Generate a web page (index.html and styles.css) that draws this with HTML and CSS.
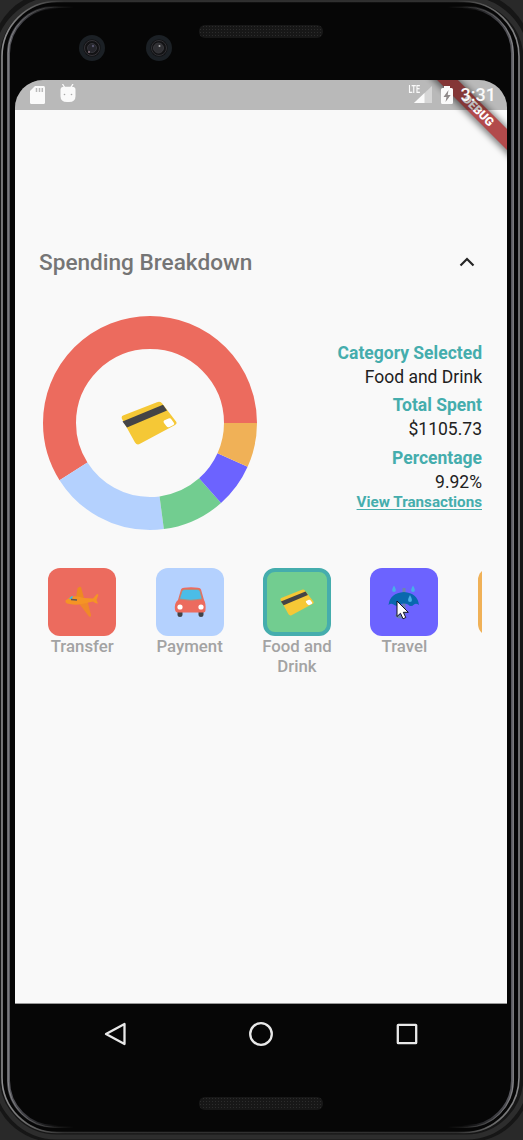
FILE: index.html
```html
<!DOCTYPE html>
<html lang="en">
<head>
<meta charset="utf-8">
<title>Spending Breakdown</title>
<link rel="stylesheet" href="styles.css">
</head>
<body>
<svg width="0" height="0" class="defs" aria-hidden="true">
  <defs>
    <symbol id="card" viewBox="0 0 56 44">
      <path d="M2 14.5 36 1.2Q39 0 41 2.2L55 20.5Q56.500 22.500 54 24L19 42.800Q16 44.500 14 41.500L1 18Q0 15.500 2 14.500Z" fill="#f5c836"/>
      <path d="M1.500 20.500 42 3.800 46 9.500 6 26.500Z" fill="#444446"/>
      <path d="M43 19.500 47.500 17.500Q49.500 16.800 50.500 18.500L53 22Q54 23.500 52 24.300L48.500 26Q46.500 26.800 45.300 25L43 22Q42 20.500 43 19.500Z" fill="#fff"/>
    </symbol>
  </defs>
</svg>
<div class="phone">
  <svg class="frame" viewBox="0 0 523 1140" aria-hidden="true">
    <defs>
      <linearGradient id="rim" x1="0" x2="1" y1="0" y2="0">
        <stop offset="0" stop-color="#8e8e90"/><stop offset=".03" stop-color="#777"/><stop offset=".12" stop-color="#303030"/>
        <stop offset=".88" stop-color="#303030"/><stop offset=".97" stop-color="#777"/><stop offset="1" stop-color="#858587"/>
      </linearGradient>
      <linearGradient id="inner" x1="0" x2="1" y1="0" y2="0">
        <stop offset="0" stop-color="#58585e"/><stop offset=".02" stop-color="#48484e"/><stop offset=".1" stop-color="#060606"/>
        <stop offset=".9" stop-color="#060606"/><stop offset=".98" stop-color="#48484e"/><stop offset="1" stop-color="#58585e"/>
      </linearGradient>
      <linearGradient id="glint" x1="0" x2="1" y1="0" y2="0">
        <stop offset="0" stop-color="#8a8a8c"/><stop offset=".03" stop-color="#666"/><stop offset=".13" stop-color="#060606"/>
        <stop offset=".87" stop-color="#060606"/><stop offset=".97" stop-color="#666"/><stop offset="1" stop-color="#8a8a8c"/>
      </linearGradient>
    </defs>
    <rect width="523" height="1140" fill="#292929"/>
    <rect x="-8" y="-8" width="539" height="1150" rx="62" fill="#161616"/>
    <rect x="-3" y="-1" width="529" height="1138" rx="60" fill="none" stroke="#2d2d2d" stroke-width="5"/>
    <rect x="2" y="1.500" width="517" height="1131" rx="55" fill="#060606" stroke="url(#rim)" stroke-width="1.600"/>
    <rect x="8.500" y="7.500" width="504" height="1119" rx="46" fill="#060606" stroke="url(#inner)" stroke-width="3"/>
    <rect x="8.200" y="7.200" width="505" height="1120" rx="46" fill="none" stroke="url(#glint)" stroke-width="1"/>
  </svg>
  <header class="bezel-top">
    <svg class="camera camera-a" viewBox="0 0 26 26"><circle cx="13" cy="13" r="13" fill="#1b2025"/><circle cx="13" cy="13" r="8.700" fill="#121214"/><circle cx="13" cy="13" r="7.500" fill="none" stroke="#353338"/><circle cx="13" cy="13" r="4.500" fill="#25252b" stroke="#34343a"/><circle cx="14" cy="11" r="1.200" fill="#55536a"/><circle cx="10" cy="17" r="1" fill="#8c7783"/></svg>
    <svg class="camera camera-b" viewBox="0 0 26 26"><circle cx="13" cy="13" r="13" fill="#1b2025"/><circle cx="13" cy="13" r="8.700" fill="#121214"/><circle cx="13" cy="13" r="7.500" fill="none" stroke="#303034"/><circle cx="12.500" cy="13" r="5" fill="#303034" stroke="#38383c"/><circle cx="13.500" cy="11" r="1" fill="#aaa"/></svg>
    <div class="speaker"></div>
  </header>
  <main class="screen">
    <svg class="banner" viewBox="0 0 90 90">
      <defs><filter id="soft" x="-20%" y="-20%" width="140%" height="140%"><feGaussianBlur stdDeviation="3"/></filter></defs>
      <path d="M14 -10 104 80" transform="translate(4.500 -1)" stroke="#000" stroke-opacity=".48" stroke-width="19" filter="url(#soft)"/>
      <path d="M15.500 -15 110.500 80" stroke="#b24a4b" stroke-width="14.700"/>
      <text class="banner-text" transform="translate(61.500 30.500) rotate(45)" y="4.200" text-anchor="middle">DEBUG</text>
    </svg>
    <div class="statusbar">
      <svg class="sd" viewBox="0 0 15 18"><path d="M5 0H13.500Q15 0 15 1.500V16.500Q15 18 13.500 18H1.500Q0 18 0 16.500V5Z" fill="#fafafa"/><path d="M6.500 2V6M9.500 2V6M12.300 2V6" stroke="#bababa" stroke-width="1.500"/></svg>
      <svg class="bot" viewBox="0 0 16 18"><path d="M2.500 0 5 4M13 0 10.500 4" stroke="#fafafa" stroke-width="1.300"/><path d="M.5 6Q.5 2.800 4 2.800H12Q15.500 2.800 15.500 6V12Q15.500 18 9 18H7Q.5 18 .5 12Z" fill="#fafafa"/><circle cx="4.500" cy="10.500" r=".8" fill="#aaa"/><circle cx="11.500" cy="10.500" r=".8" fill="#aaa"/></svg>
      <span class="lte">LTE</span>
      <svg class="signal" viewBox="0 0 18 18"><path d="M18 0V17H0Z" fill="#d6d6d6"/><path d="M10.500 7V17H0Z" fill="#fafafa"/></svg>
      <svg class="battery" viewBox="0 0 12 18"><path d="M3 0H9V2H10.500Q12 2 12 3.500V16.500Q12 18 10.500 18H1.500Q0 18 0 16.500V3.500Q0 2 1.500 2H3Z" fill="#fafafa"/><path d="M7.500 4 2.500 11H5.500L4.500 16 9.700 9H6.700Z" fill="#8f8a8a"/></svg>
      <span class="clock">3:31</span>
    </div>
    <section class="breakdown">
      <div class="heading">
        <h1>Spending Breakdown</h1>
        <svg class="chevron" viewBox="0 0 16 10"><path d="M1.500 8.500 8 2 14.500 8.500" fill="none" stroke="#262626" stroke-width="2.200"/></svg>
      </div>
      <div class="summary">
        <div class="chart">
          <svg class="ring" viewBox="-107 -107 214 214">
            <g fill="none" stroke-width="33">
              <circle r="90.500" pathLength="360" stroke="#ec6b5e" stroke-dasharray="212.300 360" stroke-dashoffset="-147.700"/>
              <circle r="90.500" pathLength="360" stroke="#b4d1fe" stroke-dasharray="65.200 360" stroke-dashoffset="-82.500"/>
              <circle r="90.500" pathLength="360" stroke="#72cd90" stroke-dasharray="34.100 360" stroke-dashoffset="-48.400"/>
              <circle r="90.500" pathLength="360" stroke="#6c63ff" stroke-dasharray="24.200 360" stroke-dashoffset="-24.200"/>
              <circle r="90.500" pathLength="360" stroke="#f0b157" stroke-dasharray="24.200 360"/>
            </g>
          </svg>
          <svg class="chart-icon"><use href="#card"/></svg>
        </div>
        <div class="details">
          <b>Category Selected</b><span>Food and Drink</span>
          <b>Total Spent</b><span>$1105.73</span>
          <b>Percentage</b><span>9.92%</span>
          <a>View Transactions</a>
        </div>
      </div>
      <div class="categories">
        <div class="category">
          <div class="tile transfer">
            <svg width="34" height="32" viewBox="0 0 34 32"><path d="M11 11 12.500 2.500Q14 0 16 1L19 12Z" fill="#ee8a22"/><path d="M12 15 22 13.500 26 29Q26.500 31.500 24 30.500Z" fill="#f0892a"/><path d="M.5 14.500 6 10.500Q12 9.500 19 12L28 12.500 32 8Q34 8 33 10L31.500 14 33 17.500Q31 18 28 15.500L17 18Q9 19.500 2 17.500Q0 16.500.5 14.500Z" fill="#f59425"/><path d="M4 13 6 10.500 8 10 7 13Z" fill="#46b7df"/><path d="M6 13.500 12 14" stroke="#605554" stroke-width="1.600"/></svg>
          </div><span>Transfer</span>
        </div>
        <div class="category">
          <div class="tile payment">
            <svg width="32" height="31" viewBox="0 0 32 31"><path d="M3.500 25H8.500V28Q8.500 30 6 30Q3.500 30 3.500 28ZM24.500 25H29.500V28Q29.500 30 27 30Q24.500 30 24.500 28Z" fill="#414347"/><path d="M7 2.500Q7.500 1 10 .7Q17 0 24 .7Q26.500 1 27 2.500L30 13Q32 16 31.500 23Q31.500 25.500 29 25.500H4Q1.500 25.500 1 23Q0 16 4 13Z" fill="#ec6b5e"/><path d="M5.500 12 8 4Q8.500 2.500 11 2.500H23Q25.500 2.500 26 4L28 12Q17 14.500 5.500 12Z" fill="#4bbde7" stroke="#b98a70" stroke-width=".8"/><circle cx="6" cy="20" r="2.600" fill="#fff"/><circle cx="27" cy="20" r="2.600" fill="#fff"/></svg>
          </div><span>Payment</span>
        </div>
        <div class="category">
          <div class="tile food selected"><svg class="tile-card"><use href="#card"/></svg></div><span>Food and Drink</span>
        </div>
        <div class="category">
          <div class="tile travel">
            <svg width="32" height="34" viewBox="0 0 32 34"><path d="M16 3V28Q16 32 12 32Q9 32 8.500 29.500" fill="none" stroke="#6b84b0" stroke-width="3"/><path d="M.5 20Q2 8 16 7Q29.500 8 31 20Q28 18 26 19.500Q23 22.500 20 19.500Q16 17.500 12 19.500Q8.500 22 5.500 19.500Q3 18 .5 20Z" fill="#0868ae"/><g fill="#49aee8"><path d="M6 .5Q10 7 6 7Q2 7 6 .5ZM25 .5Q29 7 25 7Q21 7 25 .5ZM22 10Q26 17 22 17Q18 17 22 10Z"/></g></svg>
            <svg class="cursor" viewBox="0 0 14 20"><path d="M1 1V16.500L4.500 13.300 7 18.800 9.800 17.500 7.300 12.300H12.300Z" fill="#fff" stroke="#101020" stroke-width="1"/></svg>
          </div><span>Travel</span>
        </div>
        <div class="category"><div class="tile other"></div></div>
      </div>
    </section>
  </main>
  <nav class="navbar">
    <svg viewBox="0 0 24 24"><path d="M21.500 2V22L3 12Z" fill="none" stroke="#e8e8e8" stroke-width="2.300" stroke-linejoin="round"/></svg>
    <svg viewBox="0 0 24 24"><circle cx="12" cy="12" r="10.800" fill="none" stroke="#e8e8e8" stroke-width="2.300"/></svg>
    <svg viewBox="0 0 24 24"><rect x="2.800" y="2.800" width="18.400" height="18.400" rx=".5" fill="none" stroke="#e8e8e8" stroke-width="2.300"/></svg>
  </nav>
  <footer class="bezel-bottom"><div class="speaker"></div></footer>
</div>
</body>
</html>
```
FILE: styles.css
```css
* { box-sizing: border-box; }
body { margin: 0; background: #292929; font-family: Roboto, "Liberation Sans", sans-serif; }
svg { display: block; flex: none; }
.defs { position: absolute; }
.phone { position: relative; width: 523px; height: 1140px; overflow: hidden; display: flex; flex-direction: column; }
.frame { position: absolute; inset: 0; width: 523px; height: 1140px; }
.bezel-top, .screen, .navbar, .bezel-bottom { position: relative; }

.bezel-top { height: 80px; display: flex; padding-left: 79px; }
.camera { width: 26px; height: 26px; margin-top: 35px; }
.camera-b { margin-left: 41px; }
.speaker {
  width: 124px; height: 13px; border-radius: 6px; background-color: #171717;
  background-image: radial-gradient(circle, #2c2c2c 0.8px, transparent 1px);
  background-size: 3px 3px;
}
.bezel-top .speaker { margin: 25px 0 0 27px; }

.screen {
  width: 492px; height: 924px; margin-left: 15px; background: #f9f9f9;
  border-radius: 28px 28px 0 0; border-bottom: 1px solid #999; overflow: hidden;
}
.banner { position: absolute; top: 0; right: 0; width: 90px; height: 90px; }
.banner-text { fill: #fff; font-size: 12px; font-weight: 900; }

.statusbar { position: relative; height: 29.500px; padding: 0 11px 0 15px; display: flex; align-items: center; background: rgba(0, 0, 0, 0.255); color: #fafafa; }
.sd { width: 15px; height: 18px; }
.bot { width: 16px; height: 18px; margin-left: 15px; margin-top: -3px; }
.lte { margin-left: auto; margin-top: -9px; font-size: 10px; font-weight: 700; line-height: 10px; transform: scaleX(0.72); transform-origin: right; }
.signal { width: 18px; height: 18px; margin-left: -7px; }
.battery { width: 12px; height: 18px; margin-left: 9px; }
.clock { margin-left: 8px; font-size: 18px; font-weight: 500; line-height: 30px; }

.breakdown { padding: 130px 25px 0 24px; }
.heading { display: flex; justify-content: space-between; align-items: center; height: 46px; padding-right: 7px; }
.heading h1 { margin: 0; font-size: 22.600px; font-weight: 500; line-height: 28px; color: #757575; white-space: nowrap; }
.chevron { width: 16px; height: 10px; margin-top: -1px; }
.summary { display: flex; justify-content: space-between; margin: 30px 0 0 4px; height: 214px; }
.chart { display: grid; place-items: center; width: 214px; height: 214px; }
.chart > * { grid-area: 1 / 1; }
.ring { width: 214px; height: 214px; }
.chart-icon { width: 56px; height: 44px; margin-left: -3px; margin-top: 1px; }
.details { display: flex; flex-direction: column; align-items: flex-end; padding-top: 26px; font-size: 17.500px; line-height: 24px; color: #212121; white-space: nowrap; }
.details b { color: #45adad; font-weight: 700; line-height: 22px; }
.details span { line-height: 26px; margin-bottom: 4.700px; }
.details a { margin-top: -9px; color: #45adad; font-size: 15.200px; font-weight: 700; line-height: 22px; text-decoration: underline; text-underline-offset: 2px; text-decoration-thickness: 1px; }

.categories { display: flex; gap: 20px; margin: 38.500px 0 0 -0.500px; width: 443.500px; overflow: hidden; }
.category { flex: none; width: 87.400px; display: flex; flex-direction: column; align-items: center; color: #a3a3a3; font-size: 16.800px; font-weight: 500; line-height: 20px; text-align: center; }
.tile { position: relative; width: 68px; height: 68px; border-radius: 12px; display: grid; place-items: center; }
.transfer { background: #ec6b5e; }
.payment { background: #b4d1fe; }
.food { background: #72cd90; }
.travel { background: #6c63ff; }
.other { background: #f0b157; }
.selected { border: 4px solid #45adad; }
.tile-card { width: 34px; height: 27px; }
.cursor { position: absolute; left: 26px; top: 32px; width: 14px; height: 20px; }

.navbar { height: 60px; display: flex; align-items: center; justify-content: space-between; margin: 0 104px 0 103px; }
.navbar svg { width: 24px; height: 24px; }
.bezel-bottom { display: flex; padding: 33px 0 0 199px; }
```
